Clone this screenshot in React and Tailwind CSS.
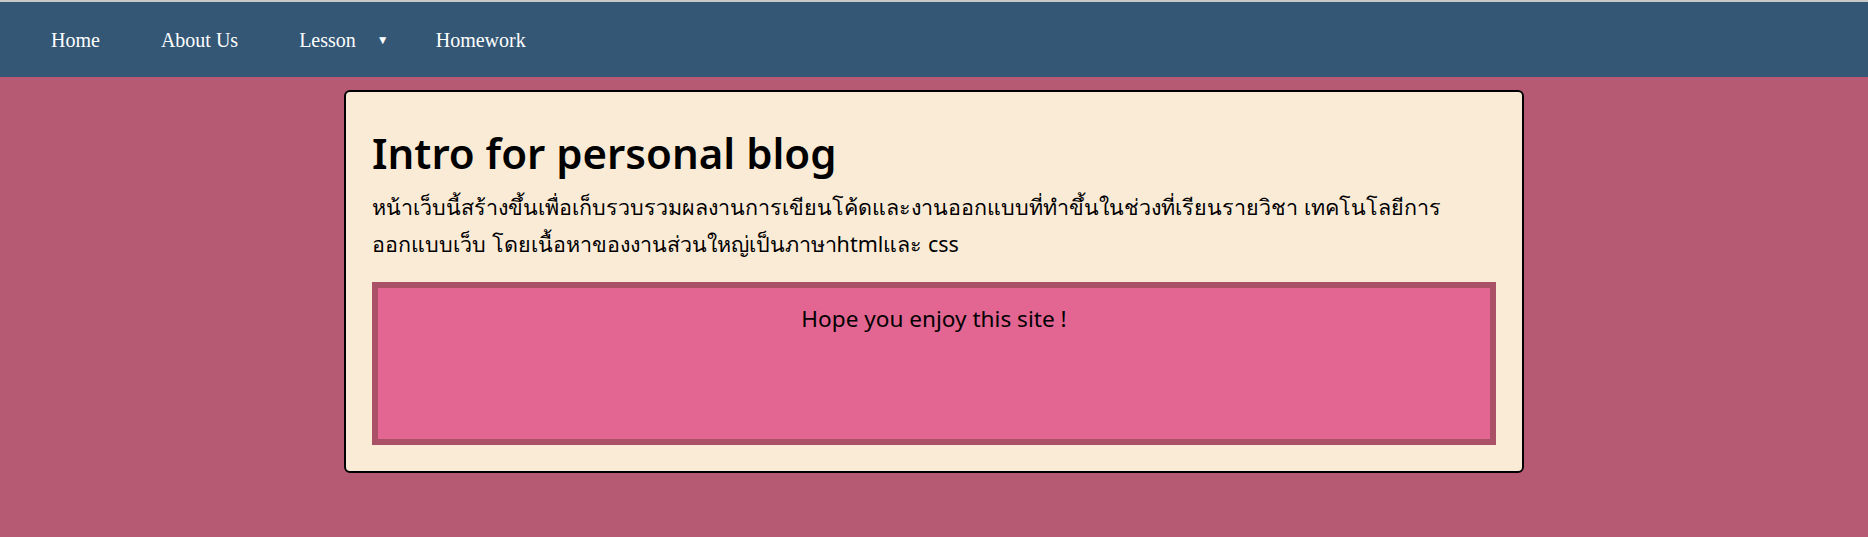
const navItems = ['Home', 'About Us'];

const App = () => {
  return (
    <div className="min-h-screen bg-[#b55a72] border-t-2 border-[#c8c8c8]">
      <nav className="bg-[#345775] h-[75px] flex items-center pl-[51px] text-white text-[20px] font-['Liberation_Serif',serif]">
        {navItems.map((item) => (
          <a key={item} href="#" className="mr-[61px]">
            {item}
          </a>
        ))}
        <a href="#">Lesson</a>
        <span className="ml-[21px] text-[12px] leading-none">▼</span>
        <a href="#" className="ml-[47px]">
          Homework
        </a>
      </nav>

      <div className="w-[1180px] mx-auto mt-[13px] bg-[#faebd7] border-2 border-black rounded-[6px] p-[26px] text-black font-['Noto_Sans',sans-serif]">
        <h1 className="text-[42px] font-semibold leading-[1.2] mt-[10px]">Intro for personal blog</h1>
        <p className="text-[21.5px] leading-[37px] mt-[10px]">
          หน้าเว็บนี้สร้างขึ้นเพื่อเก็บรวบรวมผลงานการเขียนโค้ดและงานออกแบบที่ทำขึ้นในช่วงที่เรียนรายวิชา เทคโนโลยีการ
          <br />
          ออกแบบเว็บ โดยเนื้อหาของงานส่วนใหญ่เป็นภาษาhtmlและ css
        </p>

        <div className="mt-[20px] h-[163px] bg-[#e36692] border-[6px] border-[#aa5168] pt-[14px] text-center">
          <p className="text-[22.6px]">Hope you enjoy this site !</p>
        </div>
      </div>
    </div>
  );
};

export default App;
